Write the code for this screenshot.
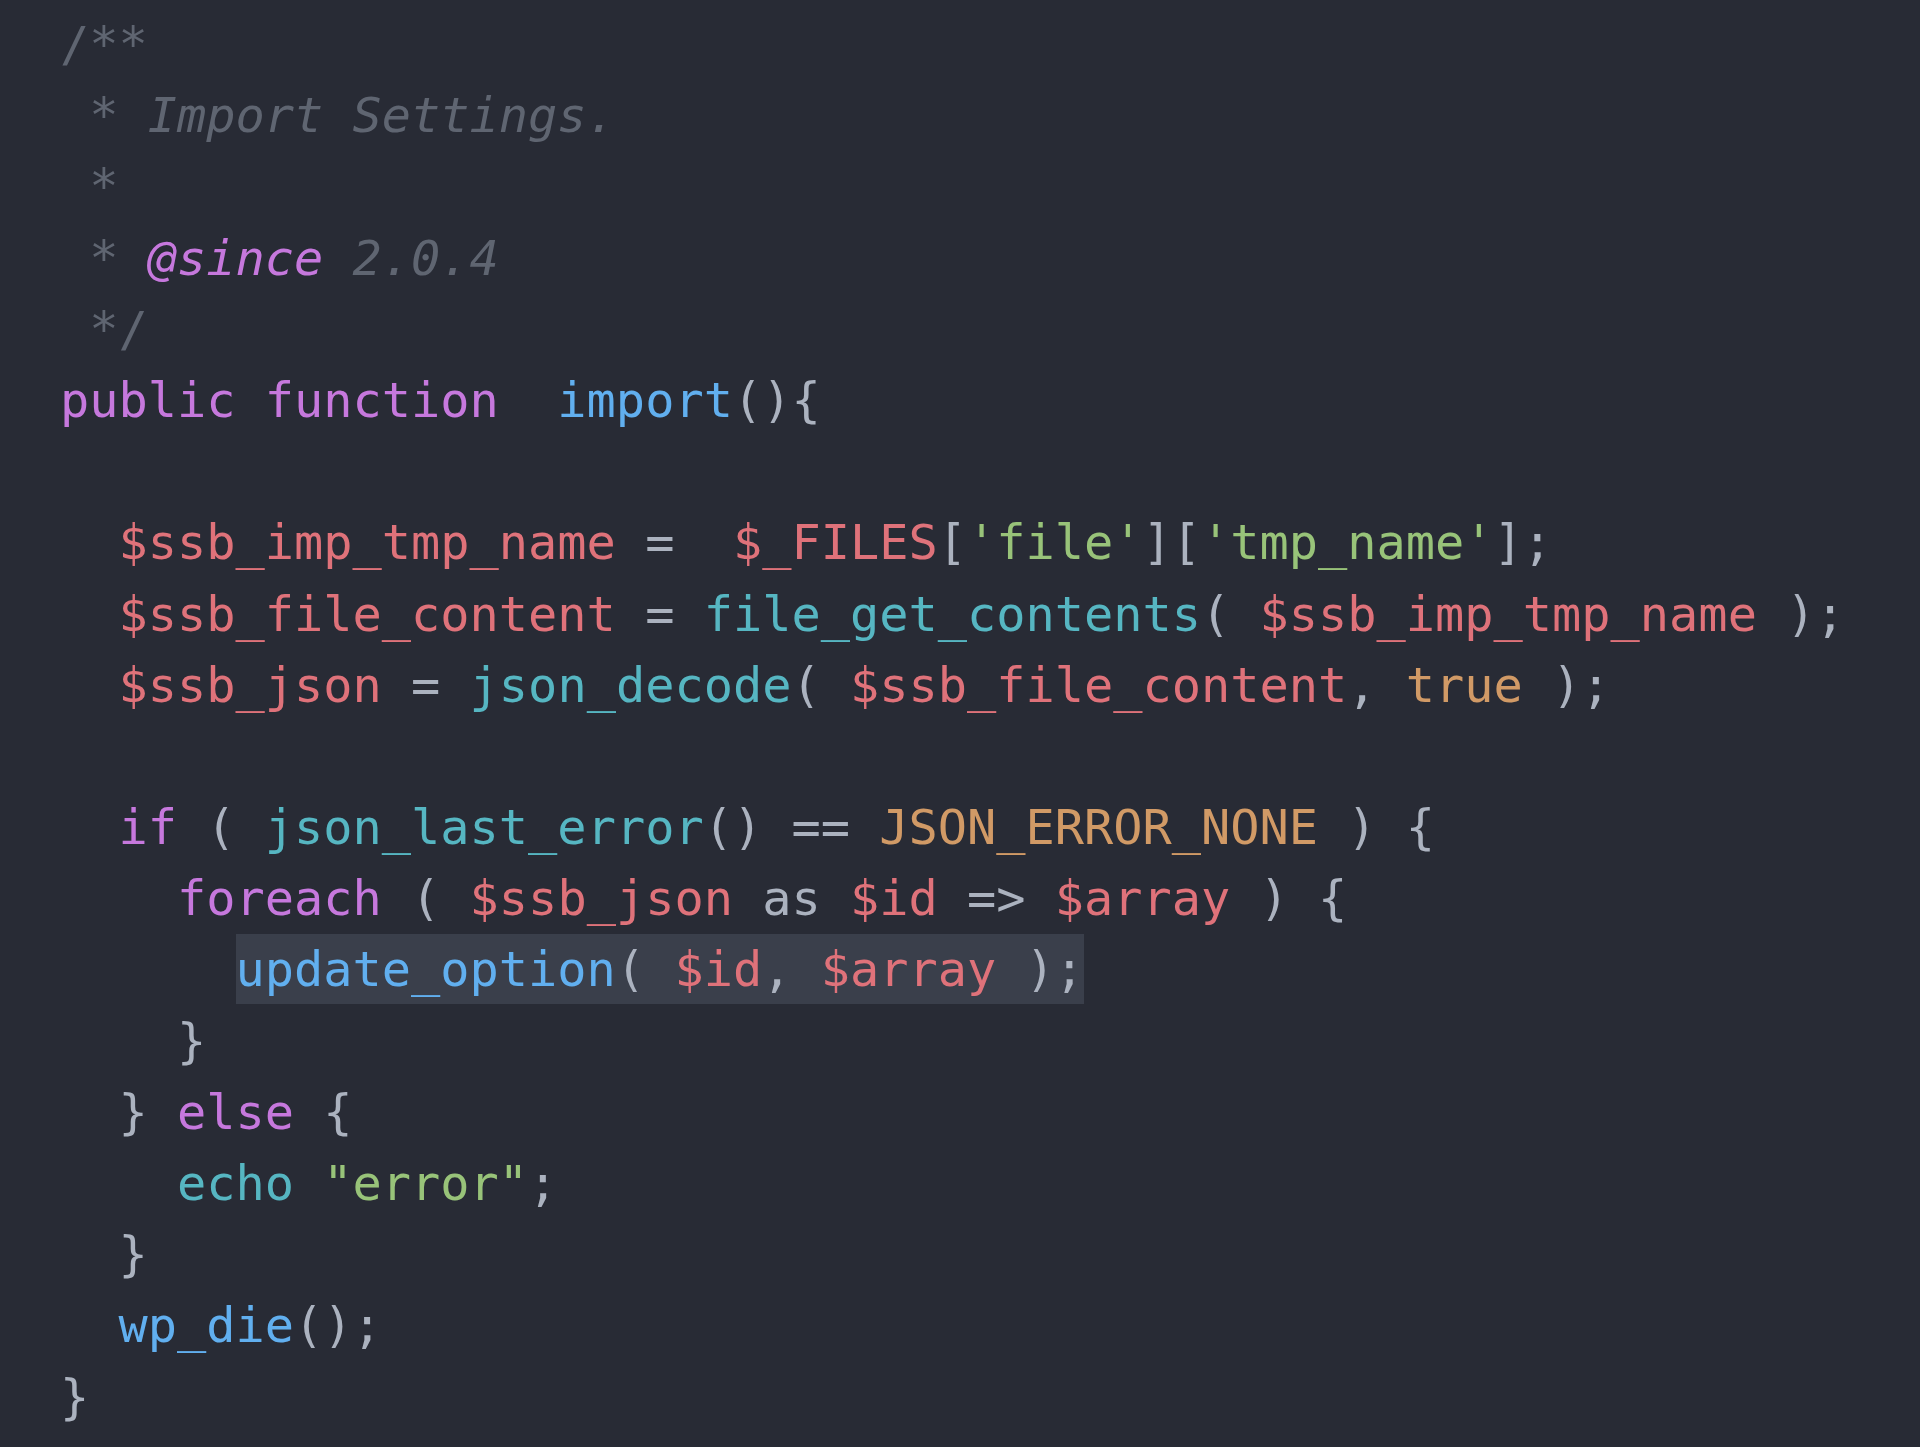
import React from "react";

type Tok = [string, string];

const C = {
  com: "text-[#5f6571]",
  tag: "text-[#c678dd]",
  kw: "text-[#c678dd]",
  fn: "text-[#61afef]",
  bi: "text-[#56b6c2]",
  v: "text-[#df727a]",
  s: "text-[#98c379]",
  o: "text-[#d19a66]",
  p: "text-[#abb2bf]",
};

const lines: { t: Tok[]; hl?: number }[] = [
  { t: [["/**", "com"]] },
  { t: [[" * Import Settings.", "comi"]] },
  { t: [[" *", "com"]] },
  { t: [[" * ", "com"], ["@since", "tag"], [" 2.0.4", "comi"]] },
  { t: [[" */", "com"]] },
  { t: [["public function", "kw"], ["  ", "p"], ["import", "fn"], ["(){", "p"]] },
  { t: [] },
  {
    t: [
      ["  ", "p"],
      ["$ssb_imp_tmp_name", "v"],
      [" =  ", "p"],
      ["$_FILES", "v"],
      ["[", "p"],
      ["'file'", "s"],
      ["][", "p"],
      ["'tmp_name'", "s"],
      ["];", "p"],
    ],
  },
  {
    t: [
      ["  ", "p"],
      ["$ssb_file_content", "v"],
      [" = ", "p"],
      ["file_get_contents", "bi"],
      ["( ", "p"],
      ["$ssb_imp_tmp_name", "v"],
      [" );", "p"],
    ],
  },
  {
    t: [
      ["  ", "p"],
      ["$ssb_json", "v"],
      [" = ", "p"],
      ["json_decode", "bi"],
      ["( ", "p"],
      ["$ssb_file_content", "v"],
      [", ", "p"],
      ["true", "o"],
      [" );", "p"],
    ],
  },
  { t: [] },
  {
    t: [
      ["  ", "p"],
      ["if", "kw"],
      [" ( ", "p"],
      ["json_last_error", "bi"],
      ["() == ", "p"],
      ["JSON_ERROR_NONE", "o"],
      [" ) {", "p"],
    ],
  },
  {
    t: [
      ["    ", "p"],
      ["foreach", "kw"],
      [" ( ", "p"],
      ["$ssb_json", "v"],
      [" as ", "p"],
      ["$id", "v"],
      [" => ", "p"],
      ["$array", "v"],
      [" ) {", "p"],
    ],
  },
  {
    hl: 1,
    t: [
      ["      ", "p"],
      ["update_option", "fn"],
      ["( ", "p"],
      ["$id", "v"],
      [", ", "p"],
      ["$array", "v"],
      [" );", "p"],
    ],
  },
  { t: [["    }", "p"]] },
  { t: [["  } ", "p"], ["else", "kw"], [" {", "p"]] },
  { t: [["    ", "p"], ["echo", "bi"], [" ", "p"], ['"error"', "s"], [";", "p"]] },
  { t: [["  }", "p"]] },
  { t: [["  ", "p"], ["wp_die", "fn"], ["();", "p"]] },
  { t: [["}", "p"]] },
];

function cls(k: string) {
  switch (k) {
    case "com":
      return C.com;
    case "comi":
      return C.com + " italic";
    case "tag":
      return C.tag + " italic";
    case "kw":
      return C.kw;
    case "fn":
      return C.fn;
    case "bi":
      return C.bi;
    case "v":
      return C.v;
    case "s":
      return C.s;
    case "o":
      return C.o;
    default:
      return C.p;
  }
}

export default function App() {
  return (
    <div className="w-[1920px] h-[1447px] bg-[#282b35] overflow-hidden pt-[9px] pl-[60px] font-['DejaVu_Sans_Mono',monospace] text-[48.6px] leading-[71.2px] whitespace-pre">
      {lines.map((ln, i) => (
        <div key={i} className="h-[71.2px]">
          {ln.hl ? (
            <>
              <span className={cls(ln.t[0][1])}>{ln.t[0][0]}</span>
              <span className="inline-block bg-[#3a3f4b] leading-[70px]">
                {ln.t.slice(1).map((t, j) => (
                  <span key={j} className={cls(t[1])}>
                    {t[0]}
                  </span>
                ))}
              </span>
            </>
          ) : (
            ln.t.map((t, j) => (
              <span key={j} className={cls(t[1])}>
                {t[0]}
              </span>
            ))
          )}
          {ln.t.length === 0 ? "\u00a0" : null}
        </div>
      ))}
    </div>
  );
}
